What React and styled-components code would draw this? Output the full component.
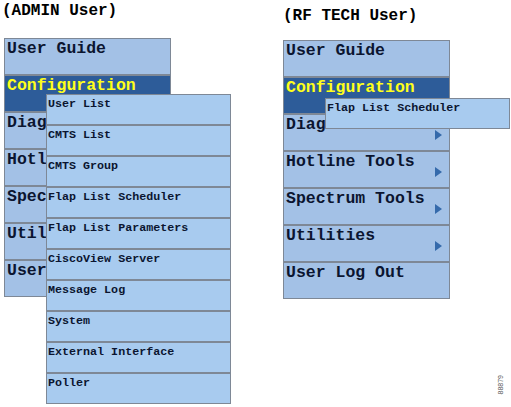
import styled, { createGlobalStyle } from "styled-components";

const Global = createGlobalStyle`
  html, body {
    margin: 0;
    padding: 0;
    background: #ffffff;
  }
  body {
    width: 511px;
    height: 407px;
    overflow: hidden;
    font-family: "Liberation Mono", "DejaVu Sans Mono", monospace;
    color: #0b1530;
  }
`;

const Page = styled.div`
  position: relative;
  display: flex;
  gap: 112px;
  width: 511px;
  height: 407px;
`;

const Column = styled.div`
  display: flex;
  flex-direction: column;
  padding-top: ${({ $top }) => $top}px;
  padding-left: ${({ $left }) => $left}px;
`;

const Title = styled.div`
  font-size: 16px;
  font-weight: bold;
  line-height: 18px;
  margin-left: ${({ $shift }) => $shift}px;
  margin-bottom: ${({ $gap }) => $gap}px;
  color: #000;
`;

const Menu = styled.div`
  position: relative;
  width: 167px;
  display: flex;
  flex-direction: column;
`;

const Item = styled.div`
  position: relative;
  box-sizing: border-box;
  height: 37px;
  padding: 1px 2px;
  border: 1px solid #7e8896;
  background: ${({ $active }) => ($active ? "#2d5c99" : "#a3c1e6")};
  color: ${({ $active }) => ($active ? "#ffff1a" : "#0b1530")};
  font-size: 16.5px;
  font-weight: bold;
  line-height: 18px;
  white-space: nowrap;
  overflow: hidden;
`;

const Arrow = styled.span`
  position: absolute;
  right: 7px;
  top: 15px;
  width: 0;
  height: 0;
  border-top: 5px solid transparent;
  border-bottom: 5px solid transparent;
  border-left: 7px solid #356aab;
`;

const SubMenu = styled.div`
  position: absolute;
  left: 42px;
  top: ${({ $top }) => $top}px;
  width: 185px;
  display: flex;
  flex-direction: column;
  z-index: 2;
`;

const SubItem = styled.div`
  box-sizing: border-box;
  height: 31px;
  padding: 2px 1px;
  border: 1px solid #7e8896;
  background: #a8cbef;
  font-size: 11.7px;
  font-weight: bold;
  line-height: 14px;
  white-space: nowrap;
`;

const FigureId = styled.div`
  position: absolute;
  right: 7px;
  bottom: 32px;
  transform: rotate(-90deg);
  transform-origin: right bottom;
  font-family: "Liberation Sans", Arial, sans-serif;
  font-size: 7px;
  color: #555;
`;

const mainItems = [
  { label: "User Guide" },
  { label: "Configuration", active: true },
  { label: "Diagnostics", arrow: true },
  { label: "Hotline Tools", arrow: true },
  { label: "Spectrum Tools", arrow: true },
  { label: "Utilities", arrow: true },
  { label: "User Log Out" },
];

const adminSub = [
  "User List",
  "CMTS List",
  "CMTS Group",
  "Flap List Scheduler",
  "Flap List Parameters",
  "CiscoView Server",
  "Message Log",
  "System",
  "External Interface",
  "Poller",
];

const rfSub = ["Flap List Scheduler"];

const MenuBlock = ({ sub, subTop }) => (
  <Menu>
    {mainItems.map((it) => (
      <Item key={it.label} $active={it.active}>
        {it.label}
        {it.arrow && <Arrow />}
      </Item>
    ))}
    <SubMenu $top={subTop}>
      {sub.map((s) => (
        <SubItem key={s}>{s}</SubItem>
      ))}
    </SubMenu>
  </Menu>
);

const App = () => {
  return (
    <>
      <Global />
      <Page>
        <Column $top={2} $left={4}>
          <Title $shift={-2} $gap={18}>(ADMIN User)</Title>
          <MenuBlock sub={adminSub} subTop={56} />
        </Column>
        <Column $top={7} $left={0}>
          <Title $shift={0} $gap={15}>(RF TECH User)</Title>
          <MenuBlock sub={rfSub} subTop={58} />
        </Column>
        <FigureId>88879</FigureId>
      </Page>
    </>
  );
};

export default App;
